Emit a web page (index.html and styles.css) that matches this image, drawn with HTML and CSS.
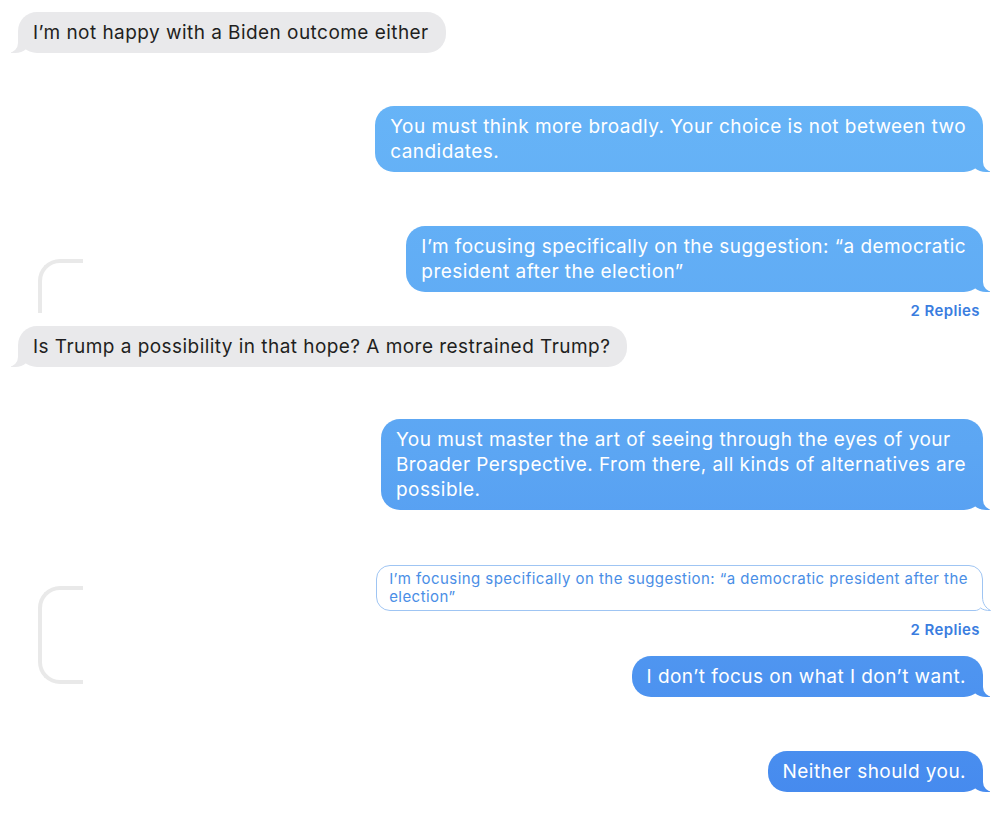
FILE: index.html
```html
<!DOCTYPE html>
<html lang="en">
<head>
<meta charset="utf-8">
<title>Messages</title>
<link rel="stylesheet" href="styles.css">
</head>
<body>
<main class="chat">
  <div class="thread-line thread-top"></div>
  <div class="thread-line thread-bracket"></div>

  <div class="row in m12"><div class="bubble gray">I’m not happy with a Biden outcome either</div></div>

  <div class="row out m53"><div class="bubble blue">You must think more broadly. Your choice is not between two<br>candidates.</div></div>

  <div class="row out m54"><div class="bubble blue">I’m focusing specifically on the suggestion: “a democratic<br>president after the election”</div></div>
  <div class="replies m9">2 Replies</div>

  <div class="row in m5"><div class="bubble gray">Is Trump a possibility in that hope? A more restrained Trump?</div></div>

  <div class="row out m52"><div class="bubble blue">You must master the art of seeing through the eyes of your<br>Broader Perspective. From there, all kinds of alternatives are<br>possible.</div></div>

  <div class="row out m55"><div class="bubble outline">I’m focusing specifically on the suggestion: “a democratic president after the<br>election”<svg class="otail" width="18" height="20" viewBox="0 0 18 20"><rect x="0" y="0" width="18" height="20" fill="#fff"/><path d="M0 19.5 H2 C4.5 19.5 6 18.5 7.5 17 C10 18.8 13 19.5 17.5 19.5 C13 17 9.5 13 9.5 6 V0" fill="none" stroke="#9fc5f3" stroke-width="1"/></svg></div></div>
  <div class="replies m9">2 Replies</div>

  <div class="row out m16"><div class="bubble blue">I don’t focus on what I don’t want.</div></div>

  <div class="row out m54"><div class="bubble blue">Neither should you.</div></div>
</main>
</body>
</html>
```

FILE: styles.css
```css
html, body {
  margin: 0;
  padding: 0;
  background: #fff;
}

body {
  font-family: Inter, "Noto Sans", "Liberation Sans", sans-serif;
  -webkit-font-smoothing: antialiased;
}

.chat {
  position: relative;
  display: flex;
  flex-direction: column;
  width: 1000px;
}

.row {
  display: flex;
}

.row.in {
  justify-content: flex-start;
  padding-left: 18px;
}

.row.out {
  justify-content: flex-end;
  padding-right: 17px;
}

.m5 { margin-top: 5px; }
.m9 { margin-top: 9px; }
.m12 { margin-top: 12px; }
.m16 { margin-top: 16px; }
.m52 { margin-top: 52px; }
.m53 { margin-top: 53px; }
.m54 { margin-top: 54px; }
.m55 { margin-top: 55px; }

.bubble {
  position: relative;
  padding: 8px 17px 8px 15px;
  font-size: 19px;
  line-height: 25px;
  border-radius: 19px;
  letter-spacing: 0.45px;
  white-space: nowrap;
}

.bubble.gray {
  background: #e9e9eb;
  color: #1f1f21;
}

.bubble.blue {
  background: linear-gradient(#6ab8f8 0px, #5ca6f3 450px, #4589ee 813px) fixed;
  color: #fff;
}

.bubble.blue::before {
  content: "";
  position: absolute;
  bottom: 0;
  right: -7px;
  width: 20px;
  height: 22px;
  background: linear-gradient(#6ab8f8 0px, #5ca6f3 450px, #4589ee 813px) fixed;
  border-bottom-left-radius: 16px 14px;
}

.bubble.blue::after {
  content: "";
  position: absolute;
  bottom: 0;
  right: -26px;
  width: 26px;
  height: 22px;
  background: #fff;
  border-bottom-left-radius: 10px;
}

.bubble.gray::before {
  content: "";
  position: absolute;
  bottom: 0;
  left: -7px;
  width: 20px;
  height: 22px;
  background: #e9e9eb;
  border-bottom-right-radius: 16px 14px;
}

.bubble.gray::after {
  content: "";
  position: absolute;
  bottom: 0;
  left: -26px;
  width: 26px;
  height: 22px;
  background: #fff;
  border-bottom-right-radius: 10px;
}

.bubble.outline {
  background: #fff;
  border: 1px solid #9fc5f3;
  color: #4a8ee6;
  font-size: 15px;
  line-height: 18px;
  letter-spacing: 0.45px;
  padding: 4px 14px 4px 12px;
  border-radius: 14px;
  border-bottom-right-radius: 4px;
}

.otail {
  position: absolute;
  right: -9px;
  bottom: -1px;
  display: block;
}

.replies {
  align-self: flex-end;
  padding-right: 20px;
  font-size: 15px;
  line-height: 20px;
  font-weight: 600;
  letter-spacing: 0.4px;
  color: #3a7ddf;
}

.thread-line {
  position: absolute;
  left: 38px;
  width: 45px;
  border: 4px solid #e9e9e9;
  border-right: none;
  box-sizing: border-box;
}

.thread-top {
  top: 259px;
  height: 54px;
  border-bottom: none;
  border-top-left-radius: 22px;
}

.thread-bracket {
  top: 586px;
  height: 98px;
  border-top-left-radius: 22px;
  border-bottom-left-radius: 22px;
}
```
